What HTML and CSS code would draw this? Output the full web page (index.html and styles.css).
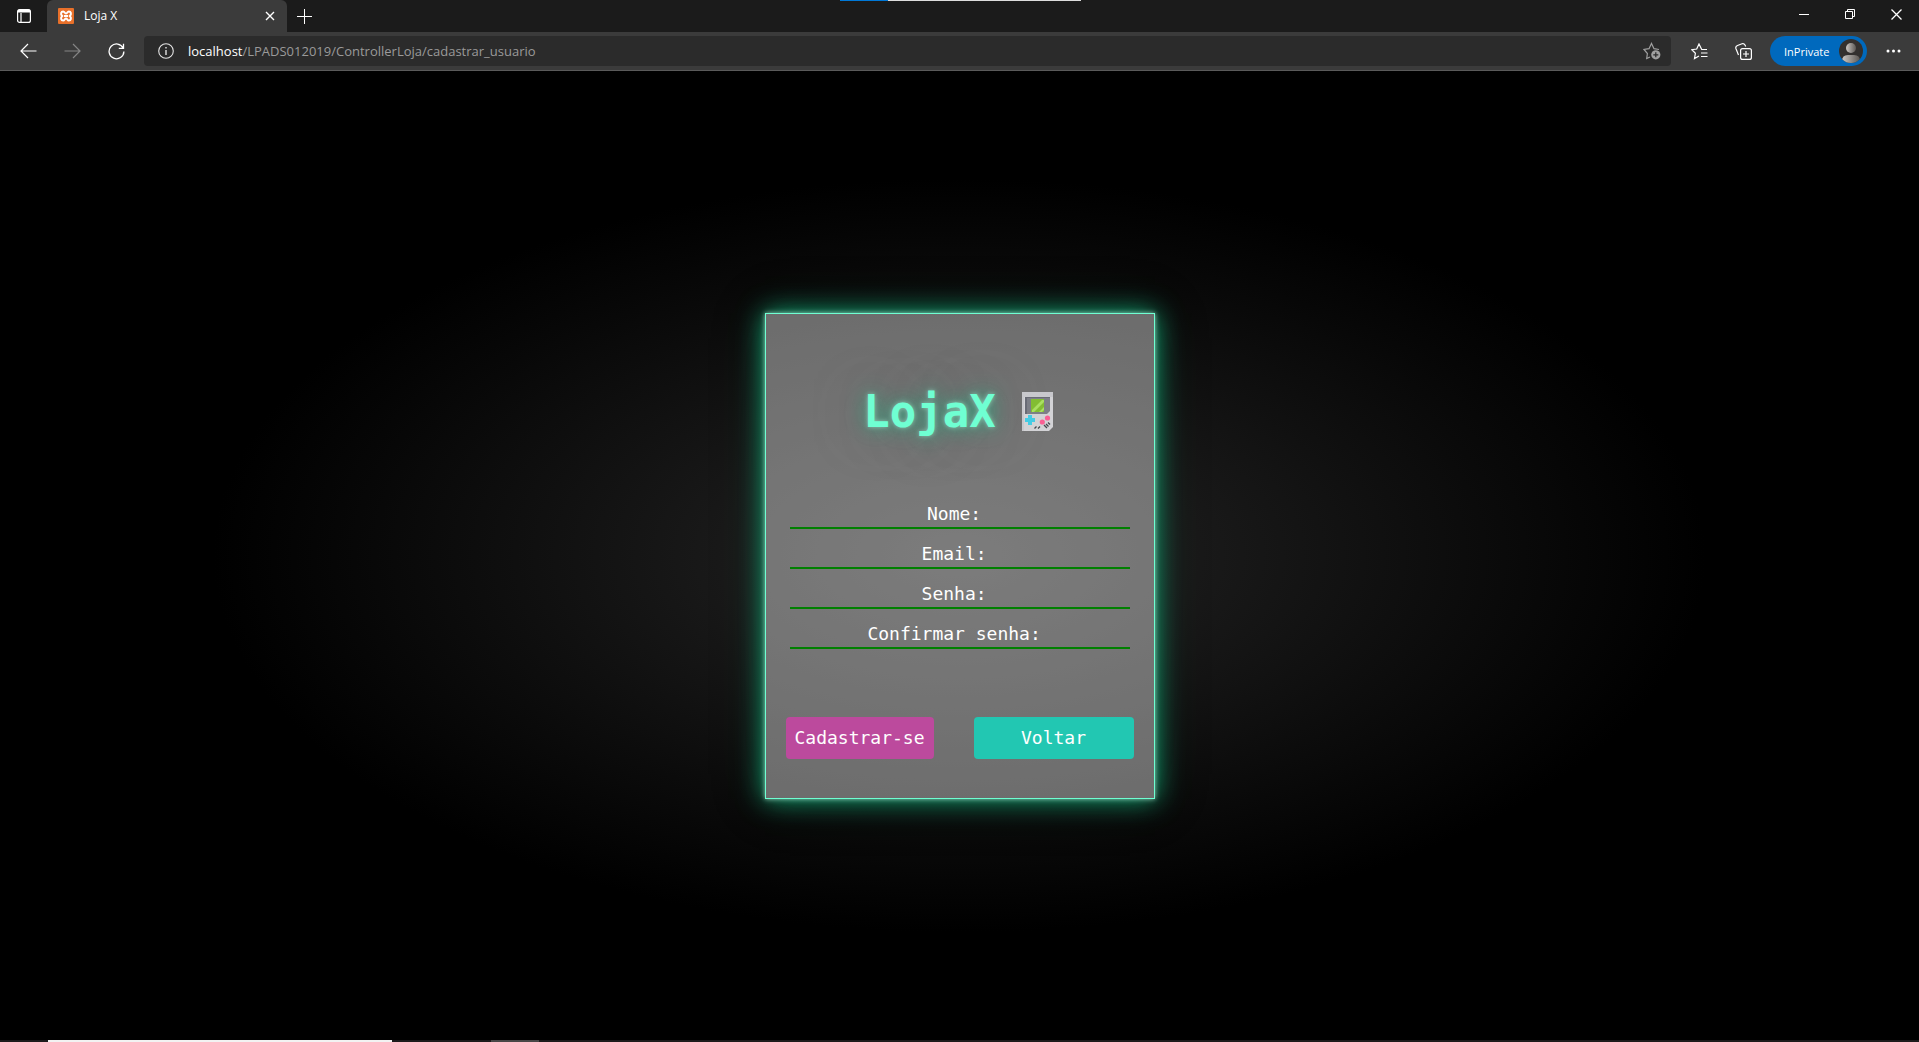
FILE: index.html
```html
<!DOCTYPE html>
<html lang="pt-BR">
<head>
<meta charset="utf-8">
<meta name="viewport" content="width=device-width, initial-scale=1">
<title>Loja X</title>
<link rel="stylesheet" href="styles.css">
</head>
<body>
<div class="browser">
  <div class="load-strip" aria-hidden="true"></div>
  <header class="chrome">
    <div class="tab-strip">
      <button class="icon-btn tab-actions" aria-label="Guias">
        <svg width="16" height="16" viewBox="0 0 16 16" fill="none" stroke="#fff" stroke-width="1.2"><rect x="1.6" y="1.6" width="12.8" height="12.8" rx="2"/><path d="M2 3.5h12M2 2.7h12" stroke-width="2"/><path d="M5 5v9.4"/></svg>
      </button>
      <div class="tab">
        <svg width="16" height="16" viewBox="0 0 16 16"><rect width="16" height="16" rx="1" fill="#e8702a"/><path d="M5.2 3.4C3 3.4 2.2 6 4.2 8 2.200 10 3 12.600 5.200 12.600 6.700 12.600 6.600 10.500 8 10.500s1.300 2.100 2.800 2.100c2.200 0 3-2.600 1-4.600 2-2 1.200-4.600-1-4.600C9.300 3.400 9.400 5.500 8 5.500S6.700 3.400 5.200 3.400Z" fill="none" stroke="#fff" stroke-width="2"/><path d="M6 8h4" stroke="#fff" stroke-width="2"/></svg>
        <span class="tab-title">Loja X</span>
        <button class="icon-btn" aria-label="Fechar guia">
          <svg width="10" height="10" viewBox="0 0 10 10" stroke="#fff" stroke-width="1.4"><path d="M1 1l8 8M9 1l-8 8"/></svg>
        </button>
      </div>
      <button class="icon-btn new-tab" aria-label="Nova guia">
        <svg width="15" height="15" viewBox="0 0 15 15" stroke="#fff"><path d="M7.500 0v15M0 7.500h15"/></svg>
      </button>
      <div class="window-controls">
        <button class="icon-btn" aria-label="Minimizar"><svg width="10" height="10" viewBox="0 0 10 10" stroke="#fff"><path d="M0 5.500h10"/></svg></button>
        <button class="icon-btn" aria-label="Restaurar"><svg width="10" height="10" viewBox="0 0 10 10" fill="none" stroke="#fff"><path d="M.5 2.500h7v7h-7zM2.500 2.500v-2h7v7h-2"/></svg></button>
        <button class="icon-btn" aria-label="Fechar"><svg width="11" height="11" viewBox="0 0 11 11" stroke="#fff" stroke-width="1.300"><path d="M.5.5l10 10M10.500.5l-10 10"/></svg></button>
      </div>
    </div>
    <div class="toolbar">
      <nav class="history">
        <button class="icon-btn" aria-label="Voltar página"><svg width="17" height="16" viewBox="0 0 17 16" fill="none" stroke="#fff" stroke-width="1.200"><path d="M16.500 8H1M8 1L1 8l7 7"/></svg></button>
        <button class="icon-btn" aria-label="Avançar"><svg width="17" height="16" viewBox="0 0 17 16" fill="none" stroke="#858585" stroke-width="1.200"><path d="M.5 8H16M9 1l7 7-7 7"/></svg></button>
        <button class="icon-btn" aria-label="Atualizar"><svg width="17" height="17" viewBox="0 0 17 17" fill="none" stroke="#fff" stroke-width="1.300"><path d="M15.200 5.200A7.400 7.400 0 1 0 15.900 8.500M15.500.8v4.600h-4.700"/></svg></button>
      </nav>
      <div class="address">
        <svg width="16" height="16" viewBox="0 0 16 16" fill="none" stroke="#e4e4e4" stroke-width="1.100"><circle cx="8" cy="8" r="7.300"/><path d="M8 7v5M8 4v1.600" stroke-width="1.400"/></svg>
        <div class="url" role="textbox" aria-label="Endereço" contenteditable="true" spellcheck="false"><span class="host">localhost</span>/LPADS012019/ControllerLoja/cadastrar_usuario</div>
        <button class="icon-btn" aria-label="Adicionar aos favoritos"><svg width="18" height="18" viewBox="0 0 18 18" fill="none" stroke="#a0a0a0" stroke-width="1.200"><path d="M7 15l-3.300 1.500.7-5L1 7.500l5-.8L8.500 1.500 11 6.700l5 .8"/><circle cx="12.800" cy="12.800" r="4.600" fill="#a0a0a0" stroke="none"/><path d="M12.800 10.300v5M10.300 12.800h5" stroke="#2b2b2b"/></svg></button>
      </div>
      <div class="tools">
        <button class="icon-btn" aria-label="Favoritos"><svg width="17" height="17" viewBox="0 0 17 17" fill="none" stroke="#fff" stroke-width="1.200"><path d="M16 6.500h-5.300L8 1 5.700 6 .8 6.700l3.600 3.600-.9 5.200L8 13M10 10h6.500M10 13.500h6.500"/></svg></button>
        <button class="icon-btn" aria-label="Coleções"><svg width="17" height="17" viewBox="0 0 17 17" fill="none" stroke="#fff" stroke-width="1.200"><rect x="5.600" y="5.600" width="10.800" height="10.800" rx="2"/><path d="M11 8v6M8 11h6M3.500 12 .9 5.500Q.3 3.300 2.500 2.500L7 .8q2-.6 3 1.200l.7 1.500"/></svg></button>
        <button class="profile">InPrivate
          <svg width="24" height="24" viewBox="0 0 24 24"><defs><linearGradient id="person"><stop stop-color="#ccc8c4"/><stop offset="1" stop-color="#5c5753"/></linearGradient><clipPath id="disc"><circle cx="12" cy="12" r="12"/></clipPath></defs><g clip-path="url(#disc)"><rect width="24" height="24" fill="#33302e"/><g fill="url(#person)"><circle cx="12" cy="9" r="5"/><path d="M3 24v-2q0-6 6-6h6q6 0 6 6v2Z"/></g></g></svg>
        </button>
        <button class="icon-btn" aria-label="Mais opções"><svg width="15" height="4" viewBox="0 0 15 4" fill="#fff"><circle cx="2" cy="2" r="1.500"/><circle cx="7.500" cy="2" r="1.500"/><circle cx="13" cy="2" r="1.500"/></svg></button>
      </div>
    </div>
  </header>

  <main class="page">
    <form class="card">
      <h1 class="brand">LojaX
        <svg width="34" height="40" viewBox="0 0 34 40" aria-hidden="true"><path d="M0 0h31v35l-4 4H0Z" fill="#d3d3d6"/><path d="M0 0h2v39H0zM0 0h31v5H0Z" fill="#c2c2c5" opacity=".6"/><path d="M3 5h25v14l-3 3H3Z" fill="#7d7f87"/><path d="M3 5h25v1H3zM3 6h2v16H3z" fill="#696b75"/><path d="M9 7h13v13H9Z" fill="#82bd33"/><path d="M10 18 20 8h2v2L12 20h-2ZM17 20l5-5v3l-2 2Z" fill="#a9df61"/><path d="M6 23h4v3h3v4h-3v3H6v-3H3v-4h3Z" fill="#45cce4"/><circle cx="25.500" cy="26" r="2.600" fill="#fa5f93"/><circle cx="20.300" cy="30" r="2.600" fill="#fa5f93"/><path d="M12.500 36.500l2-2M16 36.500l2-2M22 33l3 3M24 32l2.500 2.500M26 30.500l2 2" stroke="#45474c" stroke-width="1.300"/></svg>
      </h1>
      <div class="fields">
        <input class="field" type="text" aria-label="Nome" placeholder="Nome:&nbsp;">
        <input class="field" type="email" aria-label="Email" placeholder="Email:&nbsp;">
        <input class="field" type="password" aria-label="Senha" placeholder="Senha:&nbsp;">
        <input class="field" type="password" aria-label="Confirmar senha" placeholder="Confirmar senha:&nbsp;">
      </div>
      <div class="actions">
        <button class="btn btn-register" type="submit">Cadastrar-se</button>
        <button class="btn btn-back" type="button">Voltar</button>
      </div>
    </form>
  </main>
  <footer class="taskbar" aria-hidden="true"></footer>
</div>
</body>
</html>
```
FILE: styles.css
```css
* { box-sizing: border-box; }

body {
  margin: 0;
  background: #000;
  font-family: "Open Sans", "Noto Sans", sans-serif;
  color: #fff;
}

svg { display: block; flex: none; }

button {
  margin: 0;
  border: 0;
  font: inherit;
  color: inherit;
  cursor: pointer;
}

.browser {
  display: flex;
  flex-direction: column;
  min-height: 100vh;
  position: relative;
}

/* Thin progress line over the top edge of the window */
.load-strip {
  position: absolute;
  top: 0;
  left: 50%;
  width: 241px;
  height: 1px;
  margin-left: -120px;
  background: linear-gradient(to right, #0078d7 48px, #dedede 48px);
}

/* Browser chrome */
.chrome { border-bottom: 1px solid #5a5a5a; }

.icon-btn {
  display: flex;
  align-items: center;
  justify-content: center;
  padding: 0;
  background: none;
}

.tab-strip {
  display: flex;
  height: 32px;
  background: #1b1b1b;
}

.tab-actions { width: 47px; }

.tab {
  display: flex;
  align-items: center;
  gap: 10px;
  width: 240px;
  padding: 0 12px 0 11px;
  border-radius: 6px 6px 0 0;
  background: #3b3b3b;
}

.tab-title {
  flex: 1;
  font-size: 12px;
  line-height: 16px;
}

.new-tab { width: 35px; }

.window-controls {
  display: flex;
  margin-left: auto;
  padding-bottom: 4px;
}

.window-controls .icon-btn { width: 46px; }

.toolbar {
  display: flex;
  align-items: center;
  height: 38px;
  background: #3b3b3b;
}

.history {
  display: flex;
  width: 144px;
  padding-left: 6px;
}

.history .icon-btn { width: 44px; }

.address {
  display: flex;
  flex: 1;
  align-items: center;
  height: 30px;
  padding: 0 10px 0 14px;
  border-radius: 4px;
  background: #2b2b2b;
}

.url {
  flex: 1;
  padding-left: 14px;
  font-size: 13px;
  line-height: 20px;
  color: #9a9a9a;
  outline: 0;
}

.host { color: #fff; }

.tools {
  display: flex;
  align-items: center;
  padding-left: 6px;
}

.tools .icon-btn { width: 44px; }

.tools .icon-btn:last-child { width: 52px; }

.profile {
  display: flex;
  align-items: center;
  justify-content: space-between;
  width: 97px;
  height: 30px;
  margin-left: 5px;
  padding: 0 4px 0 14px;
  border-radius: 15px;
  background: #0069bd;
  font-size: 11px;
}

/* Sign-up page */
.page {
  display: flex;
  flex: 1;
  align-items: center;
  justify-content: center;
  background: radial-gradient(#252525, #000 55%);
}

.card {
  width: 390px;
  padding: 70px 20px 39px;
  border: 1px solid #6fffd2;
  background: rgba(255, 255, 255, 0.4);
  box-shadow: 0 0 5px #8fc8b4, 0 0 25px #10b47c, 0 0 50px rgba(16, 60, 45, 0.3);
  font-family: "DejaVu Sans Mono", monospace;
  font-size: 18px;
}

.brand {
  display: flex;
  align-items: center;
  justify-content: center;
  gap: 26px;
  margin: 0 0 61px;
  font-size: 44px;
  line-height: 56px;
  color: #6fffd2;
  text-shadow: 0 0 5px #8fc8b4, 0 0 20px #20b484, 0 0 50px #666;
}

.fields {
  display: flex;
  flex-direction: column;
  gap: 12px;
  margin: 0 4px 68px;
}

.field {
  width: 100%;
  height: 28px;
  padding: 0;
  border: 0;
  border-bottom: 2px solid #008000;
  background: none;
  font: inherit;
  color: #fff;
  text-align: center;
  outline: 0;
}

.field::placeholder {
  color: #fff;
  opacity: 1;
}

.actions {
  display: flex;
  gap: 40px;
}

.btn {
  height: 42px;
  padding: 0 9px;
  border-radius: 4px;
}

.btn-register { background: #bc4a9d; }

.btn-back {
  flex: 1;
  background: #22c7b2;
}

/* Sliver of the desktop taskbar under the window */
.taskbar {
  height: 2px;
  background:
    linear-gradient(#f2f2f2, #f2f2f2) 48px 0 / 344px 2px no-repeat,
    linear-gradient(#494747, #494747) 491px 0 / 48px 2px no-repeat,
    #1d1a1b;
}
```
